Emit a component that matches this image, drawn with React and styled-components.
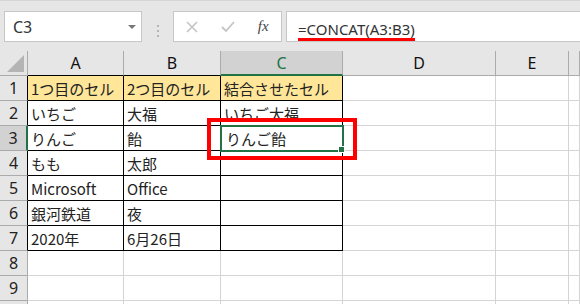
import styled, { createGlobalStyle } from 'styled-components';

const GlobalStyle = createGlobalStyle`
  body {
    margin: 0;
    overflow: hidden;
    font-family: "Noto Sans", "Noto Sans CJK JP", sans-serif;
  }
`;

const GREEN = '#217346';

const Window = styled.div`
  width: 580px;
  height: 304px;
  overflow: hidden;
  background: #e6e6e6;
`;

const Toolbar = styled.div`
  display: flex;
  align-items: flex-start;
  height: 51px;
  box-sizing: border-box;
  padding: 10px 0 0 4px;
  border-top: 1px solid #d6d6d6;
`;

const NameBox = styled.div`
  display: flex;
  align-items: center;
  justify-content: space-between;
  width: 138px;
  height: 31px;
  box-sizing: border-box;
  padding: 0 5px 0 8px;
  background: #fff;
  border: 1px solid #c6c6c6;
  font-size: 16px;
  color: #333;
`;

const Caret = styled.span`
  width: 0;
  height: 0;
  border-left: 4px solid transparent;
  border-right: 4px solid transparent;
  border-top: 4px solid #777;
`;

const Grip = styled.div`
  display: flex;
  flex-direction: column;
  gap: 3px;
  align-self: center;
  margin: 0 14px 0 15px;
  span {
    width: 2px;
    height: 2px;
    background: #b4b4b4;
  }
`;

const ButtonBox = styled.div`
  display: flex;
  align-items: center;
  width: 109px;
  height: 31px;
  box-sizing: border-box;
  background: #fff;
  border: 1px solid #c6c6c6;
`;

const IconButton = styled.div`
  display: flex;
  align-items: center;
  justify-content: center;
  width: 36px;
  height: 100%;
`;

const Fx = styled.span`
  font-family: "Liberation Serif", serif;
  font-style: italic;
  font-size: 15px;
  color: #444;
`;

const FormulaBox = styled.div`
  flex: 1;
  height: 31px;
  box-sizing: border-box;
  margin-left: 4px;
  padding: 6px 0 0 11px;
  background: #fff;
  border: 1px solid #c6c6c6;
  border-right: none;
`;

const Formula = styled.span`
  display: inline-block;
  font-family: "Noto Sans", sans-serif;
  font-size: 15px;
  line-height: 17px;
  color: #333;
  border-bottom: 3px solid #ff0000;
`;

const Sheet = styled.div`
  display: grid;
  grid-template-columns: 28px 96px 97px 122px 153px 73px 1fr;
  grid-auto-rows: 25px;
  background: #fff;
`;

const Corner = styled.div`
  display: flex;
  align-items: flex-end;
  justify-content: flex-end;
  padding: 0 3px 3px 0;
  background: #e6e6e6;
  border-right: 1px solid #ababab;
  border-bottom: 1px solid #ababab;
  &::after {
    content: '';
    border-left: 17px solid transparent;
    border-bottom: 17px solid #b4b4b4;
  }
`;

const ColHead = styled.div`
  display: flex;
  align-items: center;
  justify-content: center;
  font-size: 16px;
  color: ${(p) => (p.$selected ? GREEN : '#111')};
  background: ${(p) => (p.$selected ? '#d2d2d2' : '#e6e6e6')};
  border-right: 1px solid #ababab;
  border-bottom: ${(p) =>
    p.$selected ? `2px solid ${GREEN}` : `1px solid ${p.$boxed ? '#000' : '#ababab'}`};
`;

const RowHead = styled.div`
  display: flex;
  align-items: center;
  justify-content: center;
  font-size: 16px;
  color: #222;
  background: ${(p) => (p.$selected ? '#d2d2d2' : '#e6e6e6')};
  border-bottom: 1px solid #ababab;
  border-right: ${(p) =>
    p.$selected ? `2px solid ${GREEN}` : `1px solid ${p.$boxed ? '#000' : '#ababab'}`};
`;

const Cell = styled.div`
  position: ${(p) => (p.$active ? 'relative' : 'static')};
  display: flex;
  align-items: center;
  padding-left: ${(p) => (p.$active ? 5 : 3)}px;
  font-family: "Noto Sans CJK JP", sans-serif;
  font-size: 15px;
  color: #222;
  white-space: nowrap;
  background: ${(p) => (p.$header ? '#ffe699' : '#fff')};
  border-right: 1px solid ${(p) => (p.$boxed ? '#000' : '#d4d4d4')};
  border-bottom: 1px solid ${(p) => (p.$boxed ? '#000' : '#d4d4d4')};
`;

const Selection = styled.div`
  position: absolute;
  left: -1px;
  top: -1px;
  width: 124px;
  height: 27px;
  box-sizing: border-box;
  border: 2px solid ${GREEN};
  &::after {
    content: '';
    position: absolute;
    right: -3px;
    bottom: -3px;
    width: 5px;
    height: 5px;
    background: ${GREEN};
    border: 1px solid #fff;
  }
`;

const Callout = styled.div`
  position: absolute;
  left: -14px;
  top: -8px;
  width: 150px;
  height: 42px;
  box-sizing: border-box;
  border: 4px solid #ff0000;
`;

const columns = ['A', 'B', 'C', 'D', 'E', ''];

const data = [
  ['1つ目のセル', '2つ目のセル', '結合させたセル'],
  ['いちご', '大福', 'いちご大福'],
  ['りんご', '飴', 'りんご飴'],
  ['もも', '太郎', ''],
  ['Microsoft', 'Office', ''],
  ['銀河鉄道', '夜', ''],
  ['2020年', '6月26日', ''],
  [],
  [],
  [],
];

// the last row only peeks in by a few pixels, so its number is not shown
const visibleRows = 9;

const App = () => (
  <Window>
    <GlobalStyle />
    <Toolbar>
      <NameBox>
        C3
        <Caret />
      </NameBox>
      <Grip>
        <span />
        <span />
        <span />
      </Grip>
      <ButtonBox>
        <IconButton>
          <svg width="12" height="12" viewBox="0 0 12 12">
            <path d="M1 1 L11 11 M11 1 L1 11" stroke="#c4c4c4" strokeWidth="1.6" fill="none" />
          </svg>
        </IconButton>
        <IconButton>
          <svg width="14" height="12" viewBox="0 0 14 12">
            <path d="M1 6 L5 10 L13 1" stroke="#c4c4c4" strokeWidth="1.8" fill="none" />
          </svg>
        </IconButton>
        <IconButton>
          <Fx>fx</Fx>
        </IconButton>
      </ButtonBox>
      <FormulaBox>
        <Formula>=CONCAT(A3:B3)</Formula>
      </FormulaBox>
    </Toolbar>
    <Sheet>
      <Corner />
      {columns.map((c, i) => (
        <ColHead key={c || 'f'} $selected={c === 'C'} $boxed={i < 3}>
          {c}
        </ColHead>
      ))}
      {data.map((row, r) => {
        const boxedRow = r < 7;
        return [
          <RowHead key={`h${r}`} $selected={r === 2} $boxed={boxedRow}>
            {r < visibleRows ? r + 1 : ''}
          </RowHead>,
          ...columns.map((c, ci) => {
            const boxed = boxedRow && ci < 3;
            const active = r === 2 && ci === 2;
            return (
              <Cell
                key={`${r}-${ci}`}
                $boxed={boxed}
                $header={r === 0 && ci < 3}
                $active={active}
              >
                {row[ci] || ''}
                {active && (
                  <>
                    <Selection />
                    <Callout />
                  </>
                )}
              </Cell>
            );
          }),
        ];
      })}
    </Sheet>
  </Window>
);

export default App;
